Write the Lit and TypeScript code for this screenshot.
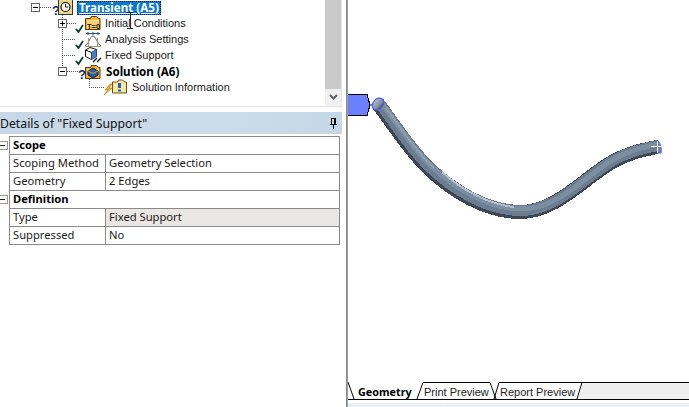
import { LitElement, html, css, svg } from "lit";
import { customElement } from "lit/decorators.js";

const dot = (x1: number, y1: number, x2: number, y2: number) =>
  svg`<line x1=${x1} y1=${y1} x2=${x2} y2=${y2} stroke="#555" stroke-dasharray="1 1" shape-rendering="crispEdges"/>`;
const exp = (x: number, y: number, plus: boolean) => svg`
  <rect x=${x + 0.5} y=${y + 0.5} width="8" height="8" fill="#fff" stroke="#666" shape-rendering="crispEdges"/>
  <line x1=${x + 2} y1=${y + 4.5} x2=${x + 7} y2=${y + 4.5} stroke="#000" shape-rendering="crispEdges"/>
  ${plus ? svg`<line x1=${x + 4.5} y1=${y + 2} x2=${x + 4.5} y2=${y + 7} stroke="#000" shape-rendering="crispEdges"/>` : null}`;
const check = (x: number, y: number) =>
  svg`<path d="M${x} ${y + 3} l2.5 3 L${x + 7} ${y - 1}" fill="none" stroke="#0c3b2e" stroke-width="1.8"/>`;
const question = (x: number, y: number) =>
  svg`<text x=${x} y=${y} font-family="Liberation Sans" font-size="13" font-weight="700" fill="#1c2a80">?</text>`;
const folder = (x: number, y: number) => svg`
  <path d="M${x + 0.5} ${y + 3.5} h5 l1 -2 h5 l2 2 h1.5 v11 h-14.5 z" fill="#f3b13c" stroke="#5a3a08" stroke-width="1"/>
  <path d="M${x + 2} ${y + 5} h12 v1.5 h-12 z" fill="#ffe9a8"/>`;

const rows = [
  {
    w: 77,
    y: -1,
    body: svg`${exp(31, 3, false)}${dot(40, 7.5, 52, 7.5)}${question(52, 15)}
      <rect x="58.5" y="-0.5" width="14" height="15" fill="#e9d98f" stroke="#333"/>
      <circle cx="65.5" cy="7" r="4.5" fill="#f4f4ec" stroke="#111" stroke-width="1.2"/>
      <path d="M65.5 4 V7 H68" fill="none" stroke="#111"/>`,
    label: "Transient (A5)",
    cls: "sel",
  },
  {
    w: 104,
    y: 15,
    body: svg`${dot(62.5, 15, 62.5, 31)}${exp(58, 19, true)}${dot(67, 23.5, 76, 23.5)}${check(76, 26)}
      ${folder(85, 15)}<rect x="87" y="22" width="12" height="7" fill="#ffd06a"/>
      <text x="87" y="29" font-family="Liberation Sans" font-size="7.5" font-weight="700" fill="#2a1800">T=0</text>`,
    label: "Initial Conditions",
  },
  {
    w: 104,
    y: 31,
    body: svg`${dot(62.5, 31, 62.5, 47)}${dot(62, 39.5, 76, 39.5)}${check(76, 42)}
      <path d="M86 33.5 H100 M88 32 v3 M93 32 v3 M98 32 v3" stroke="#2a4aa0" fill="none"/>
      <path d="M85 46 C89 44 90 36 93 36 C96 36 97 44 101 46" fill="none" stroke="#555"/>
      <path d="M85 46.5 H101 M88.5 46 L88.5 38 M97.5 46 L97.5 38" stroke="#a89870" fill="none"/>`,
    label: "Analysis Settings",
  },
  {
    w: 104,
    y: 47,
    body: svg`${dot(62.5, 47, 62.5, 63)}${dot(62, 55.5, 76, 55.5)}${check(76, 58)}
      <path d="M85.5 50 L90 47.5 L96.5 49.5 L96.5 56.5 L91.5 59.5 L85.5 56.5 Z" fill="#fff" stroke="#111"/>
      <path d="M85.5 50 L91.5 52.5 L96.5 49.5 M91.5 52.5 V59.5" fill="none" stroke="#111"/>
      <path d="M91.5 52.5 L96.5 49.5 V56.5 L91.5 59.5 Z" fill="#3f7fd0"/>
      <path d="M93 62 L97 58 M97 62 L101 58" stroke="#111" stroke-width="1.4" fill="none"/>`,
    label: "Fixed Support",
  },
  {
    w: 105,
    y: 63,
    body: svg`${dot(62.5, 63, 62.5, 67)}${exp(58, 67, false)}${dot(67, 71.5, 78, 71.5)}${question(78, 78.5)}
      ${folder(85, 64)}
      <path d="M88 71 L93 68 L98 71 V75 L93 78 L88 75 Z" fill="#1d5fb0" stroke="#10203a"/>
      <path d="M88 71 L93 73.5 L98 71" fill="none" stroke="#e9a020"/>`,
    label: "Solution (A6)",
    cls: "bold",
  },
  {
    w: 131,
    y: 79,
    body: svg`${dot(89.5, 79, 89.5, 87)}${dot(89, 87.5, 105, 87.5)}
      <path d="M110 84 L105 90 H108 L104 95 L112 88 H109 L112 84 Z" fill="#f0b030" stroke="#b07010" stroke-width="0.6"/>
      <path d="M112.5 82 h5 l1 -2 h4 l2 2 h2 v11 h-14 z" fill="#f8e8a0" stroke="#6a5020"/>
      <rect x="118" y="83" width="3" height="5" fill="#1d5fd0"/><rect x="118" y="89.5" width="3" height="2" fill="#1d5fd0"/>`,
    label: "Solution Information",
  },
];

const tube = "M378 104 C392 122 407 147 428 168 C452 191 486 212 520 212 C556 212 583 179 612 162 C628 153 642 150 657 147";

@customElement("app-root")
export class AppRoot extends LitElement {
  static styles = css`
    :host {
      display: grid;
      grid-template-columns: 346px 2px 341px;
      width: 689px;
      height: 407px;
      overflow: hidden;
      background: #fff;
      font-family: "Noto Sans", sans-serif;
      font-size: 11.2px;
      color: #1a1a1a;
    }
    .left {
      display: flex;
      flex-direction: column;
      background: #fff;
      min-height: 0;
    }
    .outline {
      height: 106px;
      width: 341px;
      flex: none;
      display: flex;
      background: #fff;
      border-right: 1px solid #e4e4e4;
      border-bottom: 1px solid #e4e4e4;
      box-sizing: content-box;
      overflow: hidden;
      position: relative;
    }
    .tree {
      flex: 1;
      margin-top: -1px;
      min-width: 0;
      font-family: "Liberation Sans", sans-serif;
      font-size: 11px;
    }
    .row {
      display: flex;
      align-items: center;
      height: 16px;
      white-space: nowrap;
    }
    .row > svg {
      flex: none;
      overflow: visible;
    }
    .label {
      padding-left: 1px;
    }
    .bold .label {
      font-family: "Noto Sans", sans-serif;
      font-size: 11.6px;
      font-weight: 700;
      padding-left: 1px;
      color: #000;
    }
    .sel .label {
      font-family: "Noto Sans", sans-serif;
      font-size: 11.6px;
      background: #0a78d0;
      color: #fff;
      font-weight: 700;
      outline: 1px dotted #123;
      outline-offset: -1px;
      padding: 0 2px;
      height: 14px;
      line-height: 14px;
      margin-top: 1px;
      text-decoration: underline;
    }
    .ibeam {
      position: absolute;
      left: 126px;
      top: 11px;
    }
    .scroll {
      width: 16px;
      flex: none;
      display: flex;
      flex-direction: column;
      background: #f0f0f0;
    }
    .track {
      flex: 1;
      background: #c9c9c9;
    }
    .btn {
      height: 17px;
      display: flex;
      align-items: center;
      justify-content: center;
    }
    .head {
      margin-top: 5px;
      width: 342px;
      height: 22px;
      box-sizing: border-box;
      display: flex;
      align-items: center;
      justify-content: space-between;
      padding-right: 4px;
      background: linear-gradient(90deg, #c6d7e7, #cddcea 60%, #c5d6e6);
      font-size: 12.25px;
      color: #111;
      white-space: nowrap;
    }
    .details {
      display: flex;
      margin-top: 2px;
    }
    .gutter {
      width: 9px;
      flex: none;
      display: flex;
      flex-direction: column;
    }
    .gutter div {
      height: 18px;
      display: flex;
      align-items: center;
    }
    .minus {
      width: 7px;
      height: 7px;
      border: 1px solid #999;
      border-left: none;
      position: relative;
      background: #fff;
    }
    .minus::after {
      content: "";
      position: absolute;
      left: 0;
      top: 3px;
      width: 5px;
      height: 1px;
      background: #222;
    }
    .table {
      width: 331px;
      box-sizing: border-box;
      border: 1px solid #8a8a8a;
      border-bottom: none;
      background: #fff;
    }
    .tr {
      display: grid;
      grid-template-columns: 95px 1fr;
      height: 18px;
      box-sizing: border-box;
      border-bottom: 1px solid #8a8a8a;
      line-height: 16px;
    }
    .tr > div {
      padding-left: 3px;
      white-space: nowrap;
    }
    .tr > div + div {
      border-left: 1px solid #8a8a8a;
      padding-left: 3px;
    }
    .group {
      font-weight: 700;
      color: #000;
      padding-left: 3px;
      height: 18px;
      box-sizing: border-box;
      border-bottom: 1px solid #8a8a8a;
      line-height: 16px;
    }
    .tr > .shade {
      background: #e9e6e3;
    }
    .sep {
      background: linear-gradient(90deg, #808080, #a8a8a8);
    }
    .right {
      display: flex;
      flex-direction: column;
      min-height: 0;
    }
    .view {
      flex: 1;
      min-height: 0;
      position: relative;
    }
    .view svg {
      position: absolute;
      left: 0;
      top: 0;
    }
    .tabs {
      height: 17px;
      flex: none;
      display: flex;
      align-items: stretch;
      border-bottom: 1px solid #000;
      color: #222;
      font-family: "Liberation Sans", sans-serif;
      font-size: 11px;
      box-sizing: content-box;
    }
    .tab {
      white-space: nowrap;
      border-top: 1px solid #000;
      box-sizing: border-box;
      line-height: 18px;
    }
    .tab.on {
      font-family: "Noto Sans", sans-serif;
      font-size: 10.8px;
      font-weight: 700;
      color: #000;
      border-top: none;
      width: 54px;
      line-height: 20px;
    }
    .tab.print {
      width: 64px;
    }
    .tab.report {
      width: 74px;
    }
    .tabs svg {
      flex: none;
    }
    .fill {
      flex: 1;
      background: #eeeeee;
      border-top: 1px solid #000;
    }
    .foot {
      flex: none;
      height: 7px;
      border-top: 3px solid #fff;
      background: #e9eff6;
      box-sizing: border-box;
    }
  `;

  render() {
    return html`
      <div class="left">
        <div class="outline">
          <div class="tree">
            ${rows.map(
              (r) => html`<div class="row ${r.cls ?? ""}">
                <svg width=${r.w} height="16" viewBox="0 ${r.y} ${r.w} 16">${r.body}</svg>
                <span class="label">${r.label}</span>
              </div>`
            )}
          </div>
          <svg class="ibeam" width="8" height="18" viewBox="0 0 8 18">
            <path d="M1 1 H7 M4 1 V17 M1 17 H7" stroke="#123" fill="none" shape-rendering="crispEdges"/>
          </svg>
          <div class="scroll">
            <div class="track"></div>
            <div class="btn">
              <svg width="9" height="7" viewBox="0 0 9 7">
                <path d="M1 1 L4.5 4.5 L8 1" fill="none" stroke="#5a6068" stroke-width="2"/>
              </svg>
            </div>
          </div>
        </div>
        <div class="head">
          <span>Details of "Fixed Support"</span>
          <svg width="9" height="11" viewBox="0 0 9 11">
            <path d="M2.5 .5 H6.5 V6.5 H2.5 Z M1 6.5 H8 M4.5 7 V11 M5.5 1 V6" fill="none" stroke="#000" shape-rendering="crispEdges"/>
          </svg>
        </div>
        <div class="details">
          <div class="gutter">
            <div><span class="minus"></span></div>
            <div></div>
            <div></div>
            <div><span class="minus"></span></div>
          </div>
          <div class="table">
            <div class="group">Scope</div>
            <div class="tr"><div>Scoping Method</div><div>Geometry Selection</div></div>
            <div class="tr"><div>Geometry</div><div>2 Edges</div></div>
            <div class="group">Definition</div>
            <div class="tr"><div>Type</div><div class="shade">Fixed Support</div></div>
            <div class="tr"><div>Suppressed</div><div>No</div></div>
          </div>
        </div>
      </div>
      <div class="sep"></div>
      <div class="right">
        <div class="view">
          <svg width="341" height="383" viewBox="348 0 341 383">
            <defs>
              <linearGradient id="end" x1="0" y1="0" x2="1" y2="0">
                <stop offset="0" stop-color="#b4bec9"/>
                <stop offset="0.6" stop-color="#8a94a0"/>
                <stop offset="1" stop-color="#46505c"/>
              </linearGradient>
            </defs>
            <path d="M347 94.5 H367 L370 105 L367 115.5 H347 Z" fill="#6a80ff" stroke="#000" shape-rendering="crispEdges"/>
            <path d="M370 105 H374" stroke="#000"/>
            <g fill="none" stroke-linecap="butt" shape-rendering="crispEdges">
              <path d=${tube} stroke="#3d4755" stroke-width="14"/>
              <path d=${tube} stroke="#6c7d90" stroke-width="11" transform="translate(1 -1.5)"/>
              <path d=${tube} stroke="#7c8ea2" stroke-width="5" transform="translate(2 -3)"/>
              <path d="M386 108 C400 126 414 150 434 168" stroke="#8e9fb0" stroke-width="2"/>
              <path d="M442 172 C462 190 488 204 514 207" stroke="#b2c1d0" stroke-width="2"/>
            </g>
            <ellipse cx="378" cy="104" rx="5" ry="6.5" transform="rotate(40 378 104)" fill="url(#end)" stroke="#4a60f0" stroke-width="1.2"/>
            <path d="M657 140 C660 142 662 148 661 153 H657" fill="#72849a" stroke="#4a60f0"/>
            <path d="M651 146.5 H663 M657.5 141 V153" stroke="#fff" shape-rendering="crispEdges"/>
          </svg>
        </div>
        <div class="tabs">
          <svg width="10" height="17" viewBox="0 0 10 17"><path d="M0 0 L6 17" stroke="#000" fill="none"/></svg>
          <span class="tab on">Geometry</span>
          <svg width="12" height="17" viewBox="0 0 12 17"><path d="M5 17 L11 .5 H12" stroke="#000" fill="none"/></svg>
          <span class="tab print">Print Preview</span>
          <svg width="12" height="17" viewBox="0 0 12 17"><path d="M0 .5 H2 L8 17 M6 17 L11 .5 H12" stroke="#000" fill="none"/></svg>
          <span class="tab report">Report Preview</span>
          <svg width="10" height="17" viewBox="0 0 10 17"><path d="M0 .5 H8 M3 17 L8 .5 H10 V17" stroke="#000" fill="none"/><path d="M4 17 L9 1 H10 V17 Z" fill="#eee"/></svg>
          <div class="fill"></div>
        </div>
        <div class="foot"></div>
      </div>
    `;
  }
}
